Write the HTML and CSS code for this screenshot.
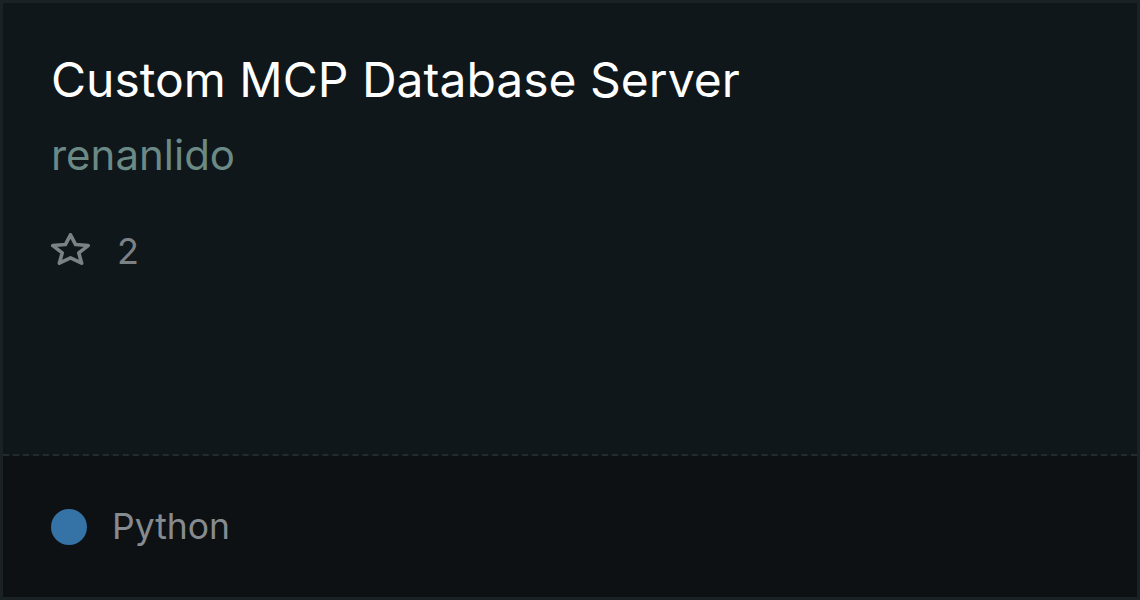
FILE: index.html
```html
<!DOCTYPE html>
<html lang="en">
<head>
    <meta charset="UTF-8">
    <title>Custom MCP Database Server</title>
    <link rel="stylesheet" href="styles.css">
</head>
<body>
    <div class="card">
        <div class="card-top">
            <h1 class="title">Custom MCP Database Server</h1>
            <div class="owner">renanlido</div>
            <div class="stars">
                <svg class="star" viewBox="0 0 39 32" width="39" height="32">
                    <path d="M19.5 1.8L24.62 11.56L37.2 12.58L27.78 19.81L30.63 30.2L19.5 24.91L8.37 30.2L11.22 19.81L1.8 12.58L14.38 11.56Z" fill="none" stroke="currentColor" stroke-width="3.6" stroke-linejoin="round"/>
                </svg>
                <span>2</span>
            </div>
        </div>
        <div class="card-bottom">
            <span class="lang-dot"></span>
            <span class="lang">Python</span>
        </div>
    </div>
</body>
</html>
```

FILE: styles.css
```css
html, body {
    margin: 0;
    padding: 0;
    background-color: #1b2225;
}

body {
    font-family: Inter, "Noto Sans", sans-serif;
}

.card {
    width: 1140px;
    height: 600px;
    box-sizing: border-box;
    border: 3px solid #1b2225;
    display: flex;
    flex-direction: column;
}

.card-top {
    flex: 1;
    background-color: #10171a;
    padding: 48px 48px 0;
    border-bottom: 2px dashed #222b2f;
}

.title {
    margin: 0;
    font-size: 48px;
    font-weight: 400;
    line-height: 58px;
    color: #ffffff;
}

.owner {
    margin-top: 20px;
    font-size: 42px;
    line-height: 51px;
    color: #6b8a86;
}

.stars {
    margin-top: 49px;
    display: flex;
    align-items: center;
    gap: 27px;
    color: #7c8185;
    font-size: 36px;
    line-height: 44px;
}

.star {
    display: block;
    margin-bottom: 4px;
}

.card-bottom {
    height: 141px;
    background-color: #0d1114;
    padding-left: 48px;
    display: flex;
    align-items: center;
    gap: 25px;
}

.lang-dot {
    width: 36px;
    height: 36px;
    border-radius: 50%;
    background-color: #3572a5;
}

.lang {
    font-size: 35.5px;
    color: #868b8f;
}
```
